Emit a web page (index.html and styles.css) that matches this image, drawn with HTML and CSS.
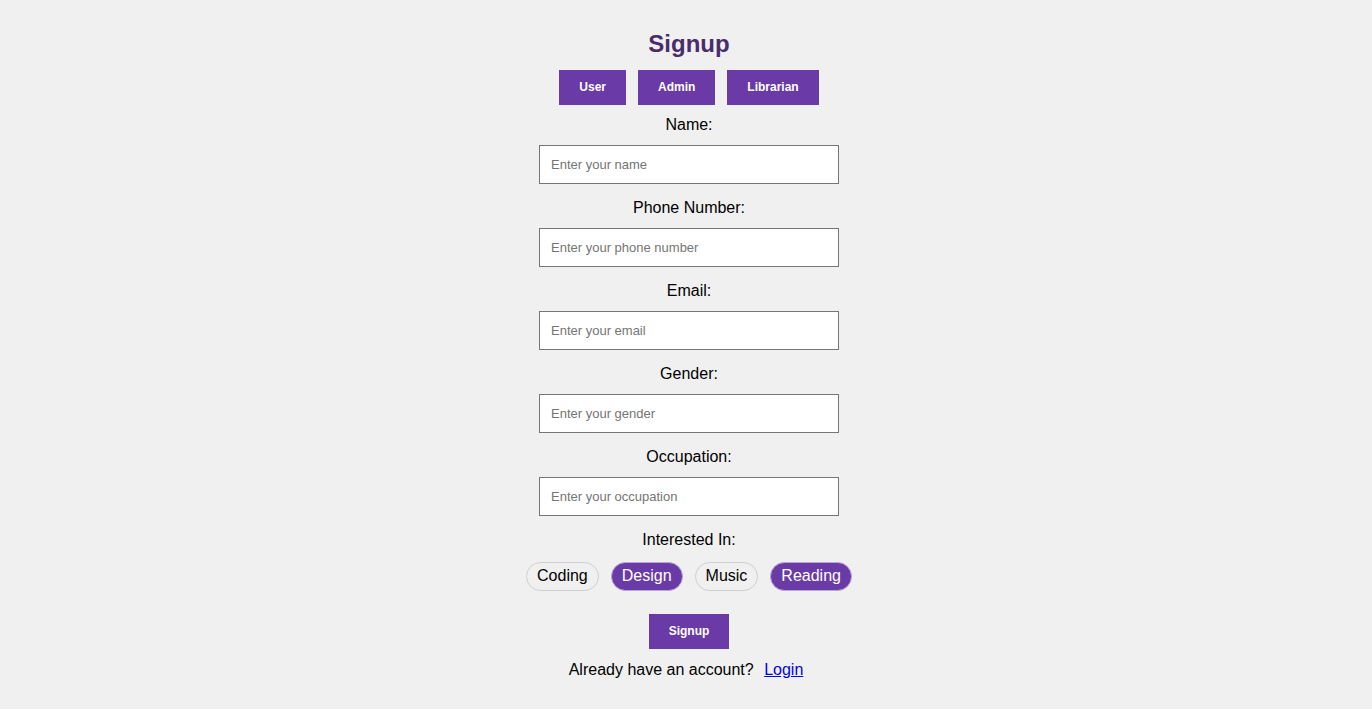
FILE: index.html
```html
<!DOCTYPE html>
<html lang="en">
<head>
<meta charset="utf-8">
<title>Signup</title>
<link rel="stylesheet" href="styles.css">
</head>
<body>
<div class="signup">
  <h2 class="title">Signup</h2>
  <div class="roles">
    <button class="btn">User</button>
    <button class="btn">Admin</button>
    <button class="btn">Librarian</button>
  </div>
  <div class="field">
    <label class="label">Name:</label>
    <input class="input" type="text" placeholder="Enter your name">
  </div>
  <div class="field">
    <label class="label">Phone Number:</label>
    <input class="input" type="text" placeholder="Enter your phone number">
  </div>
  <div class="field">
    <label class="label">Email:</label>
    <input class="input" type="text" placeholder="Enter your email">
  </div>
  <div class="field">
    <label class="label">Gender:</label>
    <input class="input" type="text" placeholder="Enter your gender">
  </div>
  <div class="field">
    <label class="label">Occupation:</label>
    <input class="input" type="text" placeholder="Enter your occupation">
  </div>
  <div class="interests">
    <span class="label label-interest">Interested In:</span>
    <div class="chips">
      <span class="chip">Coding</span>
      <span class="chip chip-on">Design</span>
      <span class="chip">Music</span>
      <span class="chip chip-on">Reading</span>
    </div>
  </div>
  <button class="btn btn-submit">Signup</button>
  <p class="login">Already have an account? <a href="#" class="login-link">Login</a></p>
</div>
</body>
</html>
```
FILE: styles.css
```css
* { box-sizing: border-box; }
body {
  margin: 0;
  background: #f0f0f0;
  font-family: "Liberation Sans", Arial, sans-serif;
  color: #000;
}
.signup {
  display: flex;
  flex-direction: column;
  align-items: center;
  padding-top: 30px;
  padding-left: 6px;
}
.title {
  margin: 0 0 12px;
  font-size: 24px;
  line-height: 28px;
  font-weight: bold;
  color: #4a2c6c;
}
.roles {
  display: flex;
  gap: 12px;
  margin-bottom: 11px;
}
.btn {
  font-family: "Liberation Sans", Arial, sans-serif;
  font-size: 12px;
  line-height: 15px;
  font-weight: bold;
  color: #fff;
  background: #6a3aa6;
  border: none;
  padding: 10px 20px;
  cursor: pointer;
}
.field {
  display: flex;
  flex-direction: column;
  align-items: center;
  margin-bottom: 14.6px;
}
.label {
  display: block;
  font-size: 16px;
  line-height: 18.4px;
  margin-bottom: 11px;
}
.input {
  width: 300px;
  height: 39px;
  padding: 0 11px;
  border: 1px solid #767676;
  background: #fff;
  font-family: "Liberation Sans", Arial, sans-serif;
  font-size: 13px;
}
.input::placeholder { color: #757575; }
.interests {
  display: flex;
  flex-direction: column;
  align-items: center;
}
.label-interest { margin-bottom: 13px; }
.chips {
  display: flex;
  gap: 12px;
}
.chip {
  font-size: 16px;
  line-height: 18.4px;
  padding: 4px 10px;
  border: 1px solid #cfcfcf;
  border-radius: 999px;
  color: #000;
}
.chip-on {
  background: #6a3aa6;
  border-color: #b9a6d2;
  color: #fff;
}
.btn-submit {
  margin-top: 23px;
}
.login {
  margin: 12px 0 0 -6px;
  font-size: 16px;
  line-height: 18.4px;
}
.login-link {
  color: #0000ee;
  margin-left: 6px;
}
```
